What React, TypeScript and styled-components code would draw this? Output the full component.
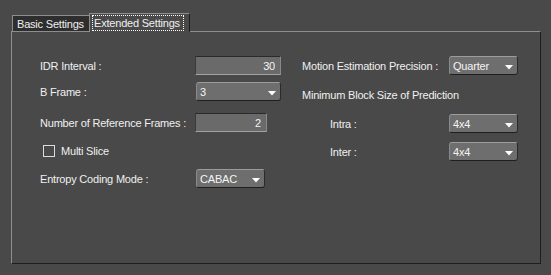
import React from "react";
import styled, { createGlobalStyle } from "styled-components";

const GlobalStyle = createGlobalStyle`
  body {
    margin: 0;
    background: #494949;
    font-family: "Liberation Sans", Arial, sans-serif;
    font-size: 11px;
    letter-spacing: -0.2px;
    color: #f0f0f0;
  }
`;

const Page = styled.div`
  width: 551px;
  height: 275px;
  box-sizing: border-box;
  padding: 13px 10px 0 11px;
`;

const TabBar = styled.div`
  display: flex;
  align-items: flex-end;
  height: 18px;
  padding-left: 1px;
`;

const Tab = styled.div<{ $active?: boolean }>`
  box-sizing: border-box;
  display: flex;
  align-items: center;
  height: ${(p) => (p.$active ? "19px" : "16px")};
  width: ${(p) => (p.$active ? "101px" : "77px")};
  padding: ${(p) => (p.$active ? "0 0 1px 3px" : "0 0 0 4px")};
  background: ${(p) => (p.$active ? "#494949" : "#2e2e2e")};
  border-top: 1px solid #8e8e8e;
  border-left: 1px solid #8e8e8e;
  border-right: ${(p) => (p.$active ? "1px solid #1e1e1e" : "none")};
  margin-bottom: ${(p) => (p.$active ? "-1px" : "0")};
  position: relative;
  z-index: ${(p) => (p.$active ? 1 : 0)};
  white-space: nowrap;
`;

const FocusRing = styled.span`
  outline: 1px dotted #ffffff;
  outline-offset: 0;
  padding: 1px 3px 1px 1px;
  line-height: 12px;
`;

const Panel = styled.div`
  box-sizing: border-box;
  width: 530px;
  height: 233px;
  border-top: 1px solid #8e8e8e;
  border-left: 1px solid #8e8e8e;
  border-right: 1px solid #1e1e1e;
  border-bottom: 1px solid #1e1e1e;
  display: flex;
  padding: 24px 0 0 28px;
`;

const Column = styled.div<{ $width?: number }>`
  display: flex;
  flex-direction: column;
  width: ${(p) => (p.$width ? `${p.$width}px` : "auto")};
`;

const Row = styled.div<{ $label: number; $top?: number; $indent?: number }>`
  display: grid;
  grid-template-columns: ${(p) => p.$label}px auto;
  align-items: center;
  height: 19px;
  margin-top: ${(p) => p.$top ?? 0}px;
  padding-left: ${(p) => p.$indent ?? 0}px;
`;

const Label = styled.span`
  white-space: nowrap;
  margin-top: 1px;
`;

const TextField = styled.input<{ $width: number }>`
  box-sizing: border-box;
  width: ${(p) => p.$width}px;
  height: 19px;
  margin: 0;
  padding: 0 5px 0 0;
  background: #6a6a6a;
  border: none;
  border-top: 1px solid #2a2a2a;
  border-left: 1px solid #3a3a3a;
  border-bottom: 1px solid #a2a2a2;
  border-right: 1px solid #8a8a8a;
  color: #f4f4f4;
  font: inherit;
  letter-spacing: inherit;
  text-align: right;
  outline: none;
`;

const Select = styled.div<{ $width: number }>`
  box-sizing: border-box;
  width: ${(p) => p.$width}px;
  height: 19px;
  margin-left: 1px;
  display: flex;
  align-items: center;
  justify-content: space-between;
  padding: 1px 4px 0 3px;
  background: #6e6e6e;
  border-radius: 3px;
  border-top: 1px solid #9c9c9c;
  border-left: 1px solid #8a8a8a;
  border-right: 1px solid #2a2a2a;
  border-bottom: 1px solid #1e1e1e;
  color: #f4f4f4;
`;

const Check = styled.span`
  box-sizing: border-box;
  width: 12px;
  height: 12px;
  border: 1px solid #dcdcdc;
  margin-left: 3px;
`;

const CheckRow = styled.div<{ $top: number }>`
  display: flex;
  align-items: center;
  gap: 6px;
  height: 19px;
  margin-top: ${(p) => p.$top}px;
`;

const Arrow = () => (
  <svg width="8" height="5" viewBox="0 0 8 5" style={{ marginTop: 3 }}>
    <polygon points="0,0 8,0 4,4.5" fill="#ffffff" />
  </svg>
);

const Dropdown: React.FC<{ value: string; width: number }> = ({ value, width }) => (
  <Select $width={width}>
    <span>{value}</span>
    <Arrow />
  </Select>
);

export default function App() {
  return (
    <Page>
      <GlobalStyle />
      <TabBar>
        <Tab>Basic Settings</Tab>
        <Tab $active>
          <FocusRing>Extended Settings</FocusRing>
        </Tab>
      </TabBar>
      <Panel>
        <Column $width={262}>
          <Row $label={155}>
            <Label>IDR Interval :</Label>
            <TextField $width={86} value="30" readOnly />
          </Row>
          <Row $label={155} $top={7}>
            <Label>B Frame :</Label>
            <Dropdown value="3" width={85} />
          </Row>
          <Row $label={155} $top={12}>
            <Label>Number of Reference Frames :</Label>
            <TextField $width={72} value="2" readOnly />
          </Row>
          <CheckRow $top={9}>
            <Check />
            <Label>Multi Slice</Label>
          </CheckRow>
          <Row $label={155} $top={9}>
            <Label>Entropy Coding Mode :</Label>
            <Dropdown value="CABAC" width={69} />
          </Row>
        </Column>
        <Column>
          <Row $label={146}>
            <Label>Motion Estimation Precision :</Label>
            <Dropdown value="Quarter" width={69} />
          </Row>
          <Row $label={146} $top={10}>
            <Label>Minimum Block Size of Prediction</Label>
          </Row>
          <Row $label={118} $top={10} $indent={28}>
            <Label>Intra :</Label>
            <Dropdown value="4x4" width={69} />
          </Row>
          <Row $label={118} $top={9} $indent={28}>
            <Label>Inter :</Label>
            <Dropdown value="4x4" width={69} />
          </Row>
        </Column>
      </Panel>
    </Page>
  );
}
